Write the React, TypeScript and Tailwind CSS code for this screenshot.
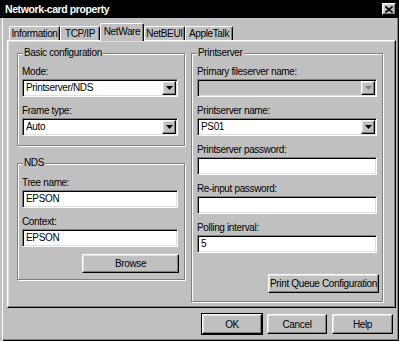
import type { ReactNode } from "react";

const RAISED =
  "bg-[#c0c0c0] border border-t-white border-l-white border-b-black border-r-black shadow-[inset_-1px_-1px_0_#808080,inset_1px_1px_0_#dfdfdf]";
const SUNKEN =
  "border border-t-[#808080] border-l-[#808080] border-b-white border-r-white shadow-[inset_1px_1px_0_#000,inset_-1px_-1px_0_#dfdfdf]";

const Arrow = ({ disabled }: { disabled?: boolean }) => (
  <div className={`${RAISED} w-[14px] h-full flex items-center justify-center`}>
    <svg width="7" height="4" viewBox="0 0 7 4">
      <polygon points="0,0 7,0 3.5,4" fill={disabled ? "#808080" : "#000"} />
    </svg>
  </div>
);

// dropdown box
const Select = ({ value, disabled }: { value?: string; disabled?: boolean }) => (
  <div
    className={`${SUNKEN} h-[18px] w-full flex items-stretch p-[1px] ${
      disabled ? "bg-[#c0c0c0]" : "bg-white"
    }`}
  >
    <div className="flex-1 pl-[2px] leading-[14px]">{value}</div>
    <Arrow disabled={disabled} />
  </div>
);

const Input = ({ value }: { value?: string }) => (
  <div className={`${SUNKEN} h-[18px] w-full bg-white pl-[3px] leading-[15px]`}>{value}</div>
);

const Label = ({ children }: { children: ReactNode }) => (
  <div className="h-[12px] leading-[12px] mb-[1px]">{children}</div>
);

const Button = ({ children, className = "" }: { children: ReactNode; className?: string }) => (
  <div className={`${RAISED} h-[19px] flex items-center justify-center whitespace-nowrap ${className}`}>
    {children}
  </div>
);

const Group = ({
  title,
  className,
  children,
}: {
  title: string;
  className: string;
  children: ReactNode;
}) => (
  <div
    className={`relative border border-[#808080] shadow-[inset_1px_1px_0_#fff,1px_1px_0_#fff] flex flex-col ${className}`}
  >
    <span className="absolute -top-[7px] left-[5px] bg-[#c0c0c0] px-[1px] leading-[12px]">{title}</span>
    {children}
  </div>
);

const Tab = ({ label, width, active }: { label: string; width: string; active?: boolean }) =>
  active ? (
    <div
      className={`${width} h-[18px] -mb-px relative z-10 bg-[#c0c0c0] border-t border-l border-r border-t-white border-l-white border-r-black rounded-t-[2px] shadow-[inset_-1px_0_0_#808080] flex justify-center pt-[2px] leading-[12px]`}
    >
      {label}
    </div>
  ) : (
    <div
      className={`${width} h-[14px] border-t border-l border-r border-t-white border-l-white border-r-black rounded-t-[2px] shadow-[inset_-1px_0_0_#808080] flex justify-center pt-[1px] leading-[12px]`}
    >
      {label}
    </div>
  );

export default function App() {
  return (
    <div className="w-[399px] h-[341px] bg-[#c0c0c0] text-black text-[10px] tracking-[-0.35px] font-['Liberation_Sans',Arial,sans-serif] flex flex-col shadow-[inset_2px_0_0_#c0c0c0,inset_3px_0_0_#fff,inset_-1px_-1px_0_#000,inset_-2px_-2px_0_#808080]">
      {/* TITLE BAR */}
      <div className="h-[18px] bg-black flex items-center justify-between pl-[5px] pr-[3px]">
        <span className="text-white text-[10.5px] font-bold tracking-[-0.4px] leading-[14px]">
          Network-card property
        </span>
        <div className={`${RAISED} w-[14px] h-[12px] flex items-center justify-center`}>
          <svg width="8" height="7" viewBox="0 0 8 7">
            <path d="M0.5 0.5 L7.5 6.5 M7.5 0.5 L0.5 6.5" stroke="#000" strokeWidth="1.6" />
          </svg>
        </div>
      </div>

      {/* TABS */}
      <div className="h-[22px] pl-[9px] flex items-end">
        <Tab label="Information" width="w-[51px]" />
        <Tab label="TCP/IP" width="w-[40px]" />
        <Tab label="NetWare" width="w-[44px]" active />
        <Tab label="NetBEUI" width="w-[41px]" />
        <Tab label="AppleTalk" width="w-[48px]" />
      </div>

      {/* PANEL */}
      <div className="ml-[7px] w-[389px] h-[268px] border border-t-white border-l-white border-b-black border-r-black shadow-[inset_-1px_-1px_0_#808080,inset_1px_1px_0_#dfdfdf] flex gap-[6px] pl-[9px] pt-[12px]">
        <div className="w-[168px] flex flex-col gap-[17px]">
          <Group title="Basic configuration" className="h-[93px] pt-[12px] pl-[4px] pr-[6px]">
            <Label>Mode:</Label>
            <Select value="Printserver/NDS" />
            <div className="h-[8px]" />
            <Label>Frame type:</Label>
            <Select value="Auto" />
          </Group>
          <Group title="NDS" className="h-[117px] pt-[13px] pl-[4px] pr-[6px]">
            <Label>Tree name:</Label>
            <Input value="EPSON" />
            <div className="h-[8px]" />
            <Label>Context:</Label>
            <Input value="EPSON" />
            <Button className="w-[97px] self-end mt-[7px] -mr-[1px]">Browse</Button>
          </Group>
        </div>

        <Group title="Printserver" className="w-[192px] h-[249px] pt-[12px] pl-[5px] pr-[5px] pb-[8px]">
          <Label>Primary fileserver name:</Label>
          <Select disabled />
          <div className="h-[8px]" />
          <Label>Printserver name:</Label>
          <Select value="PS01" />
          <div className="h-[8px]" />
          <Label>Printserver password:</Label>
          <Input />
          <div className="h-[8px]" />
          <Label>Re-input password:</Label>
          <Input />
          <div className="h-[8px]" />
          <Label>Polling interval:</Label>
          <Input value="5" />
          <Button className="w-[111px] self-end mt-auto -mr-[2px]">Print Queue Configuration</Button>
        </Group>
      </div>

      {/* DIALOG BUTTONS */}
      <div className="mt-[6px] flex justify-end gap-[5px] pr-[6px]">
        <Button className="w-[60px] h-[20px] outline outline-1 outline-black">OK</Button>
        <Button className="w-[60px] h-[20px]">Cancel</Button>
        <Button className="w-[61px] h-[20px]">Help</Button>
      </div>
    </div>
  );
}
